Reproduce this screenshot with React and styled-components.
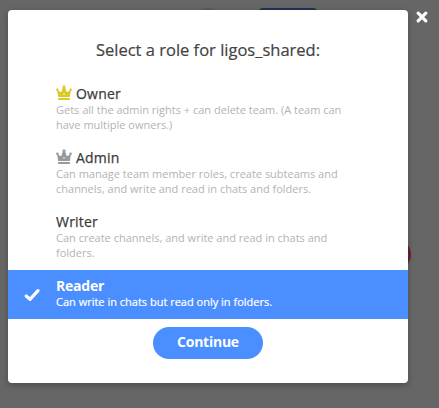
import React from 'react';
import styled, { createGlobalStyle } from 'styled-components';

const Global = createGlobalStyle`
  * { box-sizing: border-box; }
  body { margin: 0; background: #666; font-family: "Open Sans", sans-serif; overflow: hidden; }
`;
const Stage = styled.main`
  position: relative;
  width: 439px;
  height: 408px;
  padding: 10px 8px;
  background: #666;
  overflow: hidden;
`;
const BackdropTab = styled.div`
  position: absolute;
  top: 8px;
  left: 258px;
  width: 60px;
  height: 20px;
  border-radius: 5px;
  background: #1f3358;
`;
const BackdropAvatar = styled.div`
  position: absolute;
  top: 8px;
  left: 193px;
  width: 30px;
  height: 30px;
  border-radius: 50%;
  background: #5c5c58;
`;
const BackdropDot = styled.div`
  position: absolute;
  top: 239px;
  left: 380px;
  width: 31px;
  height: 31px;
  border-radius: 50%;
  background: #6e2029;
`;
const Dialog = styled.section`
  position: relative;
  display: flex;
  flex-direction: column;
  align-items: center;
  width: 400px;
  height: 373px;
  background: #fff;
  border-radius: 4px;
  box-shadow: 0 2px 6px rgba(0, 0, 0, 0.25);
`;
const Title = styled.h1`
  margin: 29px 0 17px;
  font-size: 16.5px;
  line-height: 22px;
  font-weight: 400;
  -webkit-text-stroke: 0.2px #444;
  color: #444;
`;
const Roles = styled.ul`
  width: 100%;
  margin: 0;
  padding: 0;
  list-style: none;
`;
const Role = styled.li`
  display: flex;
  height: ${p => (p.$selected ? 49 : 64)}px;
  padding-top: 8px;
  background: ${p => (p.$selected ? '#4b8eff' : 'transparent')};
  color: ${p => (p.$selected ? '#fff' : '#b3b3b3')};
`;
const Mark = styled.div`
  width: 48px;
  padding: 7px 0 0 16px;
`;
const Name = styled.div`
  display: flex;
  gap: 4px;
  font-size: 14px;
  line-height: 16px;
  font-weight: ${p => (p.$selected ? 700 : 500)};
  letter-spacing: ${p => (p.$selected ? '-0.2px' : '0.2px')};
  -webkit-text-stroke: ${p => (p.$selected ? '0' : '0.25px #3c3c3c')};
  color: ${p => (p.$selected ? '#fff' : '#3c3c3c')};
`;
const Description = styled.div`
  width: 296px;
  font-size: 11px;
  line-height: 15px;
  -webkit-text-stroke: ${p => (p.$selected ? '0.2px #fff' : '0')};
`;
const Continue = styled.button`
  width: 110px;
  height: 32px;
  margin-top: 8px;
  padding: 0 0 2px;
  border: 0;
  border-radius: 16px;
  background: #4b8eff;
  color: #fff;
  font: 700 14px/30px "Open Sans", sans-serif;
  letter-spacing: -0.25px;
`;
const Close = styled.svg`
  position: absolute;
  top: 11px;
  left: 416px;
`;

const roles = [
  { name: 'Owner', crown: '#dbcb28', text: ['Gets all the admin rights + can delete team. (A team can', 'have multiple owners.)'] },
  { name: 'Admin', crown: '#999', text: ['Can manage team member roles, create subteams and', 'channels, and write and read in chats and folders.'] },
  { name: 'Writer', text: ['Can create channels, and write and read in chats and', 'folders.'] },
  { name: 'Reader', selected: true, text: ['Can write in chats but read only in folders.'] },
];

const CrownIcon = styled.svg`
  flex: none;
  margin-top: -1px;
`;

const Crown = ({ color }) => (
  <CrownIcon width="16" height="16" viewBox="0 0 16 16" fill={color}>
    <path d="M2.2 12.1L1 5 5.2 7.3 7 2h2l1.8 5.3L15 5l-1.2 7.1z" />
    <circle cx="8" cy="1.7" r="1.5" />
    <circle cx="1.4" cy="4.8" r="1.3" />
    <circle cx="14.6" cy="4.8" r="1.3" />
    <rect x="2" y="13" width="12" height="2" rx="0.4" />
    <circle cx="8" cy="9" r="0.75" fill="#fff" />
  </CrownIcon>
);

export default function App() {
  return (
    <Stage>
      <Global />
      <BackdropTab />
      <BackdropAvatar />
      <BackdropDot />
      <Dialog>
        <Title>Select a role for ligos_shared:</Title>
        <Roles>
          {roles.map(r => (
            <Role key={r.name} $selected={r.selected}>
              <Mark>
                {r.selected && (
                  <svg width="16" height="14" viewBox="0 0 16 14" fill="none" stroke="#fff" strokeWidth="3.2" strokeLinecap="round" strokeLinejoin="round">
                    <path d="M2.2 8L6 11.4 14 2.6" />
                  </svg>
                )}
              </Mark>
              <div>
                <Name $selected={r.selected}>{r.crown && <Crown color={r.crown} />}{r.name}</Name>
                <Description $selected={r.selected}>{r.text.map(t => <div key={t}>{t}</div>)}</Description>
              </div>
            </Role>
          ))}
        </Roles>
        <Continue>Continue</Continue>
      </Dialog>
      <Close width="12" height="12" viewBox="0 0 12 12" stroke="#fff" strokeWidth="3.2" strokeLinecap="round">
        <path d="M2.2 2.2l7.6 7.6M9.8 2.2l-7.6 7.6" />
      </Close>
    </Stage>
  );
}
